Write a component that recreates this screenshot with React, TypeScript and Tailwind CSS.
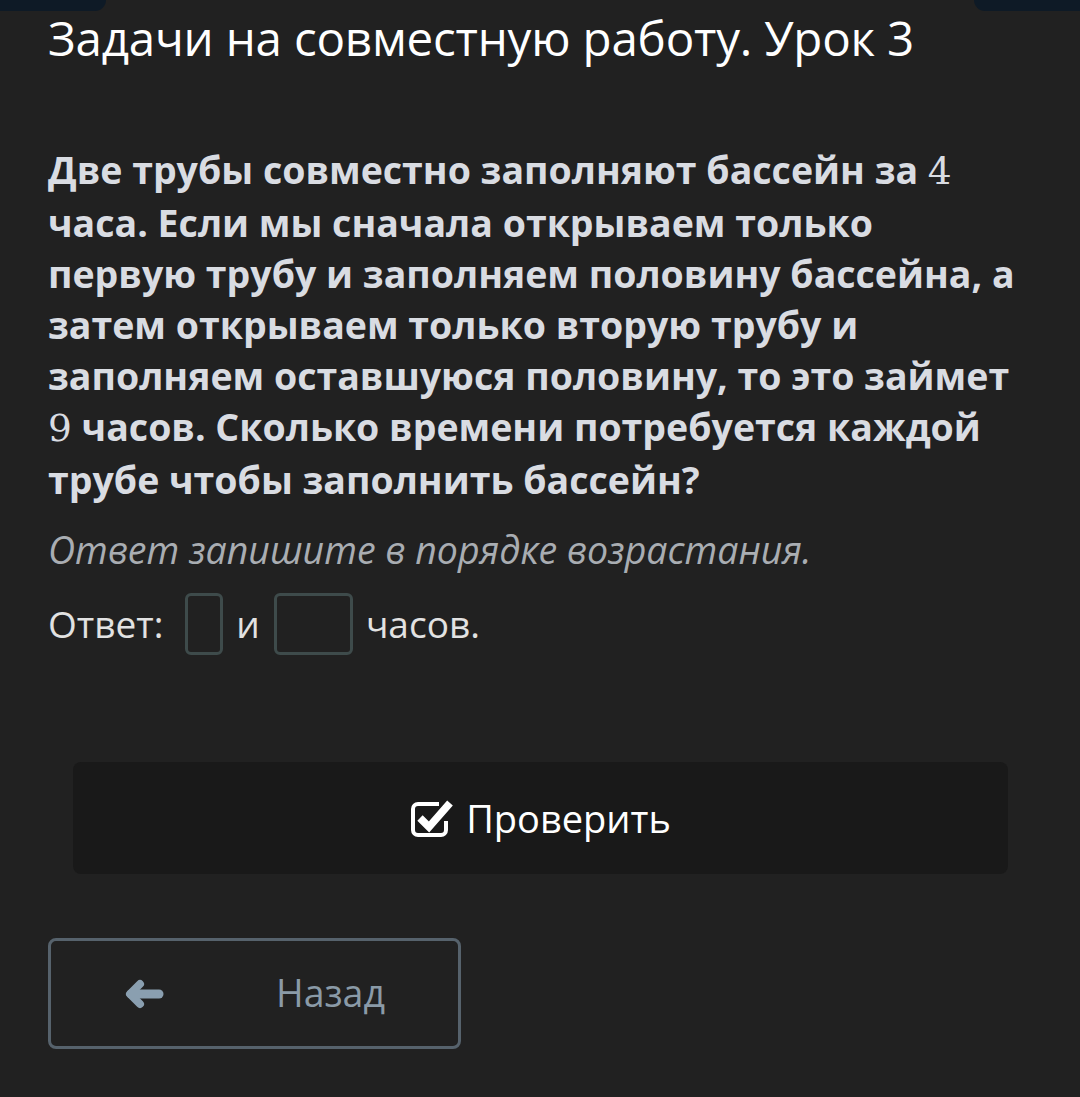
import React from "react";

function CheckIcon() {
  return (
    <svg width="44" height="40" viewBox="0 0 44 40" className="shrink-0">
      <path
        d="M29 6 H8 a5 5 0 0 0 -5 5 V32 a5 5 0 0 0 5 5 H31 a5 5 0 0 0 5 -5 V23"
        fill="none"
        stroke="#ffffff"
        strokeWidth="4"
      />
      <path
        d="M10 20 L19 29 L40 5"
        fill="none"
        stroke="#ffffff"
        strokeWidth="7.5"
        strokeLinejoin="miter"
      />
    </svg>
  );
}

function ArrowLeft() {
  return (
    <svg width="40" height="30" viewBox="0 0 40 30" className="shrink-0">
      <path
        d="M16 5 L6 15 L16 25"
        fill="none"
        stroke="#8a9fb0"
        strokeWidth="8"
        strokeLinecap="round"
        strokeLinejoin="round"
      />
      <path d="M7 15 H35" stroke="#8a9fb0" strokeWidth="9" strokeLinecap="round" />
    </svg>
  );
}

export default function App() {
  const sans = { fontFamily: '"Open Sans", "Noto Sans", sans-serif' };
  const serif = { fontFamily: '"DejaVu Serif", "Liberation Serif", serif' };
  return (
    <div
      className="relative min-h-[1097px] w-full bg-[#212121] overflow-hidden"
      style={sans}
    >
      <div className="absolute left-0 top-0 h-[11px] w-[106px] rounded-br-[12px] bg-[#0e1a26]" />
      <div className="absolute right-0 top-0 h-[11px] w-[106px] rounded-bl-[12px] bg-[#0e1a26]" />

      <div className="px-12 pt-[10px]">
        <h1 className="text-[47.5px] leading-[56px] font-normal text-white tracking-[-0.2px]">
          Задачи на совместную работу. Урок 3
        </h1>

        <p className="mt-[78px] w-[990px] text-[37.5px] leading-[51px] font-bold text-[#d9dce2] whitespace-nowrap">
          Две трубы совместно заполняют бассейн за{" "}
          <span className="font-normal" style={serif}>
            4
          </span>
          <br />
          часа. Если мы сначала открываем только
          <br />
          первую трубу и заполняем половину бассейна, а
          <br />
          затем открываем только вторую трубу и
          <br />
          заполняем оставшуюся половину, то это займет
          <br />
          <span className="font-normal" style={serif}>
            9
          </span>{" "}
          часов. Сколько времени потребуется каждой
          <br />
          трубе чтобы заполнить бассейн?
        </p>

        <p className="mt-[19px] text-[37.5px] leading-[51px] italic text-[#a9adb2]">
          Ответ запишите в порядке возрастания.
        </p>

        <div className="mt-[18px] flex items-center text-[37px] text-[#e2e2e2]">
          <span>Ответ:</span>
          <div className="ml-[22px] h-[62px] w-[38px] rounded-[6px] border-[3px] border-[#3e4b4b]" />
          <span className="ml-[13px]">и</span>
          <div className="ml-[14px] h-[62px] w-[79px] rounded-[6px] border-[3px] border-[#3e4b4b]" />
          <span className="ml-[13px]">часов.</span>
        </div>
      </div>

      <div className="mx-[73px] mt-[107px] flex h-[112px] w-[935px] items-center justify-center gap-[12px] rounded-[8px] bg-[#191919]">
        <CheckIcon />
        <span className="text-[38px] text-white">Проверить</span>
      </div>

      <div className="ml-12 mt-[64px] flex h-[111px] w-[413px] items-center rounded-[8px] border-[3px] border-[#56626c]">
        <div className="ml-[73px] flex">
          <ArrowLeft />
        </div>
        <span className="ml-[112px] text-[37.5px] text-[#8a9aa7]">Назад</span>
      </div>
    </div>
  );
}
